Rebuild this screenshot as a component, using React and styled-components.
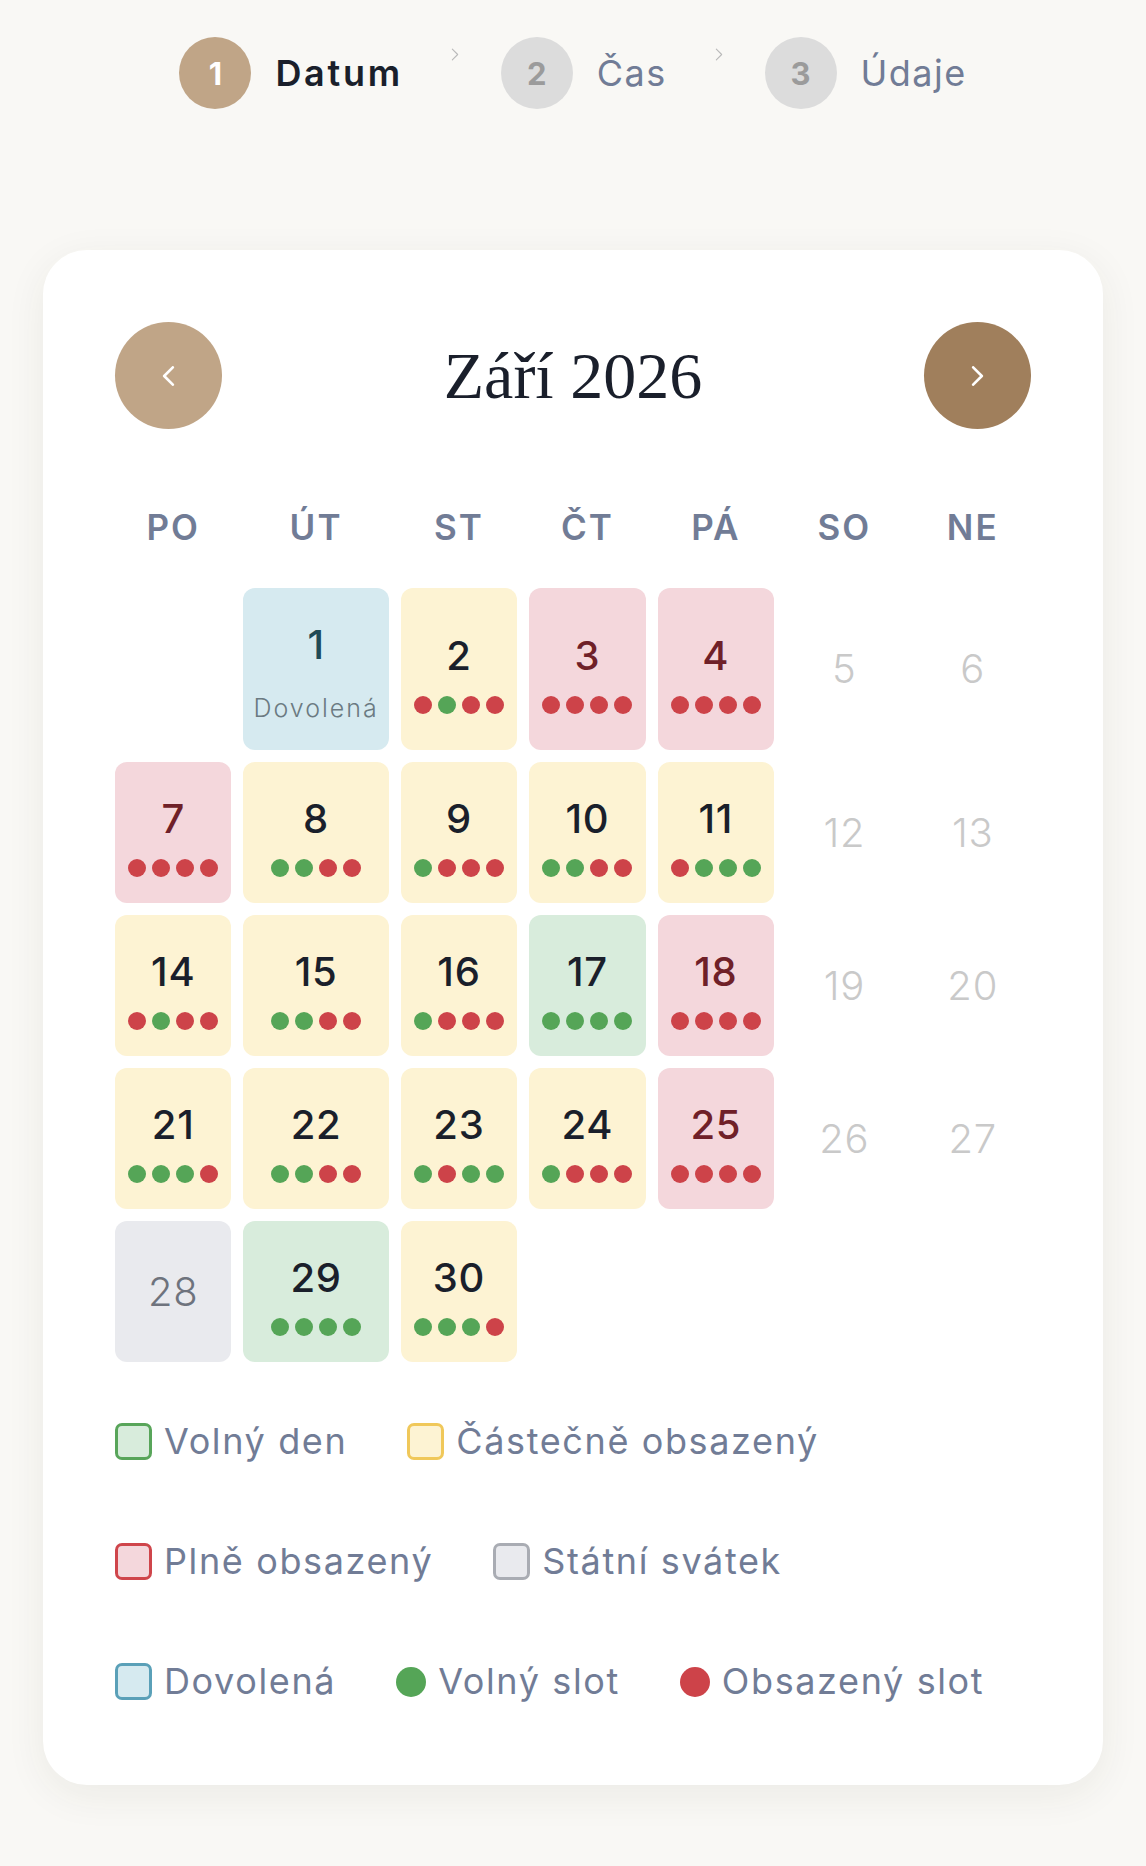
import styled, { createGlobalStyle } from "styled-components";

const GlobalStyle = createGlobalStyle`
  body {
    margin: 0;
    background: #f9f8f5;
    font-family: "Inter", "DejaVu Sans", sans-serif;
  }
`;

const G = "g";
const R = "r";

// type: vacation | partial | full | free | holiday | weekend
const days = [
  { d: 1, type: "vacation", label: "Dovolená" },
  { d: 2, type: "partial", slots: [R, G, R, R] },
  { d: 3, type: "full", slots: [R, R, R, R] },
  { d: 4, type: "full", slots: [R, R, R, R] },
  { d: 5, type: "weekend" },
  { d: 6, type: "weekend" },
  { d: 7, type: "full", slots: [R, R, R, R] },
  { d: 8, type: "partial", slots: [G, G, R, R] },
  { d: 9, type: "partial", slots: [G, R, R, R] },
  { d: 10, type: "partial", slots: [G, G, R, R] },
  { d: 11, type: "partial", slots: [R, G, G, G] },
  { d: 12, type: "weekend" },
  { d: 13, type: "weekend" },
  { d: 14, type: "partial", slots: [R, G, R, R] },
  { d: 15, type: "partial", slots: [G, G, R, R] },
  { d: 16, type: "partial", slots: [G, R, R, R] },
  { d: 17, type: "free", slots: [G, G, G, G] },
  { d: 18, type: "full", slots: [R, R, R, R] },
  { d: 19, type: "weekend" },
  { d: 20, type: "weekend" },
  { d: 21, type: "partial", slots: [G, G, G, R] },
  { d: 22, type: "partial", slots: [G, G, R, R] },
  { d: 23, type: "partial", slots: [G, R, G, G] },
  { d: 24, type: "partial", slots: [G, R, R, R] },
  { d: 25, type: "full", slots: [R, R, R, R] },
  { d: 26, type: "weekend" },
  { d: 27, type: "weekend" },
  { d: 28, type: "holiday" },
  { d: 29, type: "free", slots: [G, G, G, G] },
  { d: 30, type: "partial", slots: [G, G, G, R] },
];

const cellBg = {
  vacation: "#d6eaf0",
  partial: "#fdf3d3",
  full: "#f4d7dc",
  free: "#d8ecdc",
  holiday: "#e9eaee",
  weekend: "transparent",
};

const numColor = {
  vacation: "#1f4a56",
  partial: "#1a1f2b",
  full: "#6f2028",
  free: "#1a1f2b",
  holiday: "#6e737d",
  weekend: "#c9c9c9",
};

const weekdays = ["PO", "ÚT", "ST", "ČT", "PÁ", "SO", "NE"];

const legend = [
  { text: "Volný den", kind: "box", fill: "#d8ecdc", line: "#58a55a" },
  { text: "Částečně obsazený", kind: "box", fill: "#fdf3d3", line: "#f0c85a" },
  { text: "Plně obsazený", kind: "box", fill: "#f4d7dc", line: "#cf454b" },
  { text: "Státní svátek", kind: "box", fill: "#e9eaee", line: "#a9acb3" },
  { text: "Dovolená", kind: "box", fill: "#d6eaf0", line: "#5aa0b8" },
  { text: "Volný slot", kind: "dot", fill: "#55a557" },
  { text: "Obsazený slot", kind: "dot", fill: "#cd4349" },
];

const Chevron = ({ dir = "right", color, w, h, stroke }) => (
  <svg width={w} height={h} viewBox="0 0 12 18" fill="none">
    <polyline
      points={dir === "right" ? "2,1 10,9 2,17" : "10,1 2,9 10,17"}
      stroke={color}
      strokeWidth={stroke}
      strokeLinecap="round"
      strokeLinejoin="round"
    />
  </svg>
);

const App = () => {
  return (
    <Page>
      <GlobalStyle />
      <Stepper>
        <Step>
          <StepNum $active>1</StepNum>
          <StepLabel $active>Datum</StepLabel>
        </Step>
        <StepArrow><Chevron color="#b9b9b9" w={8} h={15} stroke={1.6} /></StepArrow>
        <Step>
          <StepNum>2</StepNum>
          <StepLabel>Čas</StepLabel>
        </Step>
        <StepArrow><Chevron color="#b9b9b9" w={8} h={15} stroke={1.6} /></StepArrow>
        <Step>
          <StepNum>3</StepNum>
          <StepLabel>Údaje</StepLabel>
        </Step>
      </Stepper>

      <Card>
        <NavRow>
          <NavButton $bg="#c0a587">
            <Chevron dir="left" color="#fff" w={13} h={20} stroke={2.4} />
          </NavButton>
          <MonthTitle>Září 2026</MonthTitle>
          <NavButton $bg="#a07f5c">
            <Chevron color="#fff" w={13} h={20} stroke={2.4} />
          </NavButton>
        </NavRow>

        <Grid>
          {weekdays.map((w) => (
            <Weekday key={w}>{w}</Weekday>
          ))}
          <Blank />
          {days.map((day) => (
            <DayCell key={day.d} $type={day.type} $plain={!day.slots && !day.label}>
              <DayNum $type={day.type}>{day.d}</DayNum>
              {day.label && <DayLabel>{day.label}</DayLabel>}
              {day.slots && (
                <Dots>
                  {day.slots.map((s, i) => (
                    <Dot key={i} $free={s === G} />
                  ))}
                </Dots>
              )}
            </DayCell>
          ))}
        </Grid>

        <Legend>
          {legend.map((item) => (
            <LegendItem key={item.text}>
              {item.kind === "box" ? (
                <Swatch $fill={item.fill} $line={item.line} />
              ) : (
                <SwatchDot $fill={item.fill} />
              )}
              {item.text}
            </LegendItem>
          ))}
        </Legend>
      </Card>
    </Page>
  );
};

export default App;

const Page = styled.div`
  padding: 37px 43px 80px;
`;

const Stepper = styled.div`
  display: flex;
  justify-content: center;
  align-items: flex-start;
`;

const Step = styled.div`
  display: flex;
  align-items: center;
  gap: 24px;
`;

const StepNum = styled.div`
  width: 72px;
  height: 72px;
  border-radius: 50%;
  display: flex;
  align-items: center;
  justify-content: center;
  font-size: 31px;
  font-weight: 700;
  background: ${(p) => (p.$active ? "#c0a587" : "#dcdcdc")};
  color: ${(p) => (p.$active ? "#ffffff" : "#9b9b9b")};
`;

const StepLabel = styled.span`
  font-size: 36px;
  letter-spacing: ${(p) => (p.$active ? "0.075em" : "0.04em")};
  font-weight: ${(p) => (p.$active ? 600 : 400)};
  color: ${(p) => (p.$active ? "#1a1f2b" : "#717c96")};
`;

const StepArrow = styled.div`
  margin: 10px 42px 0 48px;
  display: flex;
`;

const Card = styled.div`
  margin-top: 141px;
  background: #ffffff;
  border-radius: 44px;
  padding: 72px 72px 82px;
  box-shadow: 0 10px 40px rgba(60, 50, 30, 0.07);
`;

const NavRow = styled.div`
  display: flex;
  justify-content: space-between;
  align-items: center;
  margin-bottom: 78px;
`;

const NavButton = styled.button`
  width: 107px;
  height: 107px;
  border-radius: 50%;
  border: none;
  background: ${(p) => p.$bg};
  display: flex;
  align-items: center;
  justify-content: center;
  padding: 0;
  cursor: pointer;
`;

const MonthTitle = styled.h2`
  margin: 0;
  font-family: "Liberation Serif", "DejaVu Serif", serif;
  font-size: 66px;
  font-weight: 400;
  color: #1a1f2b;
`;

const Grid = styled.div`
  display: grid;
  grid-template-columns: repeat(7, 1fr);
  column-gap: 12px;
  row-gap: 12px;
`;

const Weekday = styled.div`
  text-align: center;
  font-size: 35px;
  letter-spacing: 0.06em;
  font-weight: 600;
  color: #717c96;
  line-height: 40px;
  margin-bottom: 29px;
`;

const Blank = styled.div``;

const DayCell = styled.div`
  background: ${(p) => cellBg[p.$type]};
  border-radius: 12px;
  padding: ${(p) => (p.$plain ? "29px 10px" : "33px 10px 26px")};
  display: flex;
  flex-direction: column;
  align-items: center;
  justify-content: center;
  cursor: ${(p) => (p.$type === "weekend" || p.$type === "holiday" ? "default" : "pointer")};
`;

const DayNum = styled.div`
  font-size: 40px;
  line-height: 48px;
  letter-spacing: 0.02em;
  font-weight: ${(p) => (p.$type === "weekend" || p.$type === "holiday" ? 300 : 500)};
  color: ${(p) => numColor[p.$type]};
`;

const DayLabel = styled.div`
  margin-top: 24px;
  font-size: 25px;
  line-height: 31px;
  letter-spacing: 0.08em;
  font-weight: 300;
  color: #6b7a82;
  white-space: nowrap;
`;

const Dots = styled.div`
  margin-top: 16px;
  display: flex;
  gap: 6px;
`;

const Dot = styled.span`
  width: 18px;
  height: 18px;
  border-radius: 50%;
  background: ${(p) => (p.$free ? "#55a557" : "#cd4349")};
`;

const Legend = styled.div`
  margin-top: 58px;
  display: flex;
  flex-wrap: wrap;
  column-gap: 60px;
  row-gap: 77px;
`;

const LegendItem = styled.div`
  display: flex;
  align-items: center;
  gap: 12px;
  font-size: 36px;
  line-height: 43px;
  letter-spacing: 0.045em;
  color: #717c96;
`;

const Swatch = styled.span`
  width: 31px;
  height: 31px;
  border-radius: 7px;
  border: 3px solid ${(p) => p.$line};
  background: ${(p) => p.$fill};
`;

const SwatchDot = styled.span`
  width: 30px;
  height: 30px;
  border-radius: 50%;
  background: ${(p) => p.$fill};
`;
